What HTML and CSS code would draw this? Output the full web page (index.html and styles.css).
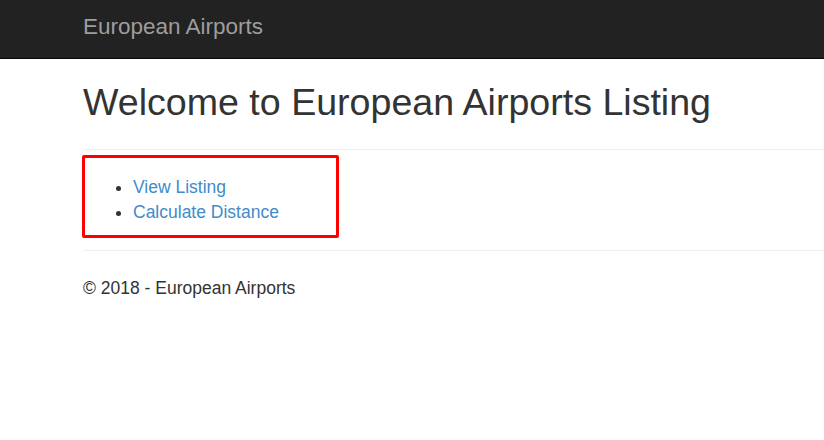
FILE: index.html
```html
<!DOCTYPE html>
<html lang="en">
<head>
<meta charset="utf-8">
<title>European Airports</title>
<link rel="stylesheet" href="styles.css">
</head>
<body>
<header class="navbar">
  <a class="brand" href="#">European Airports</a>
</header>
<main class="content">
  <h1 class="title">Welcome to European Airports Listing</h1>
  <hr class="rule rule-top">
  <div class="highlight">
    <ul class="links">
      <li><a href="#">View Listing</a></li>
      <li><a href="#">Calculate Distance</a></li>
    </ul>
  </div>
  <hr class="rule rule-bottom">
  <footer class="footer">
    <p>&copy; 2018 - European Airports</p>
  </footer>
</main>
</body>
</html>
```
FILE: styles.css
```css
html, body {
  margin: 0;
  padding: 0;
  background: #fff;
}
body {
  font-family: "Liberation Sans", Arial, Helvetica, sans-serif;
  font-size: 17.5px;
  line-height: 25px;
  color: #333;
}
.navbar {
  box-sizing: border-box;
  height: 59px;
  background: #222;
  border-bottom: 1px solid #080808;
  padding: 16px 0 0 83px;
}
.brand {
  display: block;
  font-size: 22.5px;
  line-height: 22px;
  color: #9d9d9d;
  text-decoration: none;
}
.content {
  padding-left: 83px;
}
.title {
  margin: 23px 0 26px;
  font-size: 37.6px;
  line-height: 41px;
  font-weight: 500;
  color: #333;
}
.rule {
  border: 0;
  border-top: 1px solid #eee;
  height: 0;
  margin: 0;
}
.highlight {
  margin: 5px 0 0 -1px;
  width: 251px;
  border: 3px solid #ff0000;
  border-radius: 2px;
  padding: 17px 0 10px;
}
.links {
  margin: 0;
  padding-left: 48px;
}
.links a {
  color: #428bca;
  text-decoration: none;
}
.rule-bottom {
  margin-top: 12px;
}
.footer p {
  margin: 25px 0 0;
}
```
